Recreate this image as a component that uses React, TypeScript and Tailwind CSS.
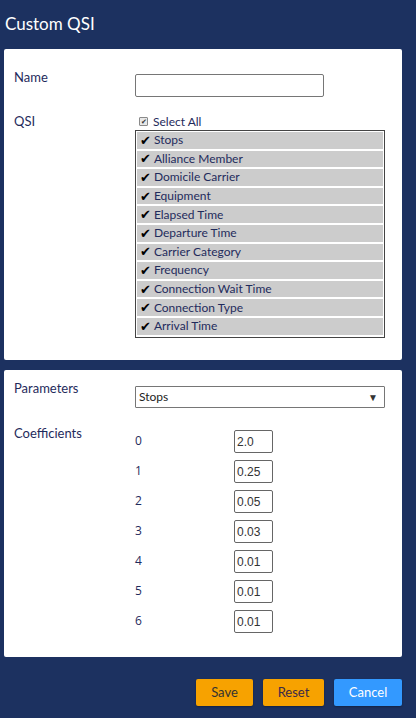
import React from 'react';

const qsiItems = [
  'Stops',
  'Alliance Member',
  'Domicile Carrier',
  'Equipment',
  'Elapsed Time',
  'Departure Time',
  'Carrier Category',
  'Frequency',
  'Connection Wait Time',
  'Connection Type',
  'Arrival Time',
];

const coefficients = ['2.0', '0.25', '0.05', '0.03', '0.01', '0.01', '0.01'];

const App: React.FC = () => {
  return (
    <div className="w-[416px] h-[718px] bg-[#1c3160] font-['Lato',sans-serif] text-[#1f2b5c] overflow-hidden">
      <div className="h-[49px] pl-[5px] pt-[13px] text-[17px] text-white leading-[22px]">Custom QSI</div>

      <div className="mx-[4px] w-[398px] h-[311px] bg-white rounded-[2px] pt-[20px] px-[10px]">
        <div className="flex">
          <div className="w-[121px] text-[13px] leading-[16px]">Name</div>
          <input className="w-[189px] h-[23px] border border-[#767676] rounded-[2px] mt-[5px] outline-none" />
        </div>

        <div className="flex mt-[16px]">
          <div className="w-[121px] text-[13px] leading-[16px]">QSI</div>
          <div>
            <div className="flex items-center h-[17px] pl-[4px] text-[12px]">
              <span className="w-[9px] h-[9px] border border-[#8a8a8a] bg-[#e8e8e8] rounded-[1px] flex items-center justify-center text-[7px] leading-none text-[#333] mr-[5px]">✔</span>
              <span>Select All</span>
            </div>
            <div className="w-[250px] h-[208px] border border-[#444] pt-[1px] px-[1px]">
              {qsiItems.map((item) => (
                <div key={item} className="h-[16.6px] mb-[2px] bg-[#cccccc] flex items-center text-[12px] leading-none pl-[3px]">
                  <span className="text-black text-[13px] mr-[3px] font-['DejaVu_Sans',sans-serif]">✔</span>
                  <span>{item}</span>
                </div>
              ))}
            </div>
          </div>
        </div>
      </div>

      <div className="mx-[4px] mt-[10px] w-[398px] h-[287px] bg-white rounded-[2px] pt-[10px] px-[10px]">
        <div className="flex">
          <div className="w-[121px] text-[13px] leading-[16px]">Parameters</div>
          <div className="w-[250px] h-[22px] mt-[6px] border border-[#767676] rounded-[1px] flex items-center justify-between pl-[3px] pr-[6px] text-[12px] text-[#222]">
            <span>Stops</span>
            <span className="text-[10px] text-[#333]">▼</span>
          </div>
        </div>

        <div className="flex mt-[16px]">
          <div className="w-[121px] text-[13px] leading-[16px] pt-[1px]">Coefficients</div>
          <div className="flex flex-col gap-[7px] mt-[6px]">
            {coefficients.map((c, i) => (
              <div key={i} className="flex items-start h-[23px]">
                <div className="w-[99px] text-[12px] font-['Open_Sans',sans-serif] pt-[4px] leading-[14px] text-[#1f2b5c]">{i}</div>
                <div className="w-[39px] h-[23px] border border-[#666] rounded-[2px] flex items-center pl-[2px] text-[12px] font-['Liberation_Sans',sans-serif] text-[#333]">
                  {c}
                </div>
              </div>
            ))}
          </div>
        </div>
      </div>

      <div className="flex justify-end gap-[10px] pr-[14px] mt-[22px]">
        <button className="w-[57px] h-[27px] bg-[#f7a200] rounded-[2px] text-[13px] text-[#333] shadow-[0_1px_2px_rgba(0,0,0,0.3)]">Save</button>
        <button className="w-[61px] h-[27px] bg-[#f7a200] rounded-[2px] text-[13px] text-[#3a2a4a] shadow-[0_1px_2px_rgba(0,0,0,0.3)]">Reset</button>
        <button className="w-[68px] h-[27px] bg-[#3399ff] rounded-[2px] text-[13px] text-white shadow-[0_1px_2px_rgba(0,0,0,0.3)]">Cancel</button>
      </div>
    </div>
  );
};

export default App;
